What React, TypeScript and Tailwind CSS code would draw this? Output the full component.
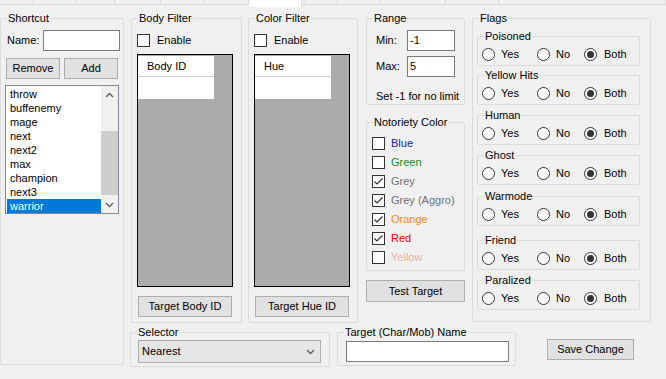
import type { ReactNode } from "react";
import clsx from "clsx";

const Group = ({
  title,
  className,
  children,
}: {
  title: string;
  className?: string;
  children?: ReactNode;
}) => (
  <div className={clsx("relative border border-[#dcdcdc] rounded-[2px]", className)}>
    <span className="absolute -top-[7px] left-[6px] bg-[#f0f0f0] px-[1px] leading-[13px] whitespace-nowrap">
      {title}
    </span>
    {children}
  </div>
);

const Button = ({ label, className }: { label: string; className?: string }) => (
  <div
    className={clsx(
      "flex items-center justify-center border border-[#adadad] bg-[#e1e1e1] leading-none",
      className
    )}
  >
    {label}
  </div>
);

const Check = ({ checked }: { checked?: boolean }) => (
  <div className="flex h-[13px] w-[13px] shrink-0 items-center justify-center border border-[#333] bg-white">
    {checked && (
      <svg width="11" height="11" viewBox="0 0 11 11">
        <polyline points="1.5,5.5 4,8 9.5,2.5" fill="none" stroke="#333" strokeWidth="1.2" />
      </svg>
    )}
  </div>
);

const Radio = ({ checked }: { checked?: boolean }) => (
  <div className="flex h-[13px] w-[13px] shrink-0 items-center justify-center rounded-full border border-[#333] bg-white">
    {checked && <div className="h-[7px] w-[7px] rounded-full bg-[#333]" />}
  </div>
);

const Chevron = ({ up }: { up?: boolean }) => (
  <svg width="9" height="6" viewBox="0 0 9 6">
    <polyline
      points={up ? "1,5 4.5,1.5 8,5" : "1,1 4.5,4.5 8,1"}
      fill="none"
      stroke="#606060"
      strokeWidth="1.4"
    />
  </svg>
);

const shortcuts = ["throw", "buffenemy", "mage", "next", "next2", "max", "champion", "next3", "warrior"];

const notoriety = [
  { label: "Blue", color: "text-[#1a1ab8]", checked: false },
  { label: "Green", color: "text-[#1a8a1a]", checked: false },
  { label: "Grey", color: "text-[#707070]", checked: true },
  { label: "Grey (Aggro)", color: "text-[#707070]", checked: true },
  { label: "Orange", color: "text-[#f58a1f]", checked: true },
  { label: "Red", color: "text-[#e00000]", checked: true },
  { label: "Yellow", color: "text-[#e8b0a6]", checked: false },
];

const flags = [
  { label: "Poisoned", mt: "mt-[17px]" },
  { label: "Yellow Hits", mt: "mt-[9px]" },
  { label: "Human", mt: "mt-[10px]" },
  { label: "Ghost", mt: "mt-[10px]" },
  { label: "Warmode", mt: "mt-[11px]" },
  { label: "Friend", mt: "mt-[14px]" },
  { label: "Paralized", mt: "mt-[10px]" },
];

const tabs = [34, 43, 38, 46, 43, 45, 53, 4, 32, 42, 66, 53, 167];

const FilterGroup = ({ title, column, button, className }: { title: string; column: string; button: string; className?: string }) => (
  <Group title={title} className={clsx("h-[305px] pl-[5px]", className)}>
    <div className="mt-[15px] flex h-[13px] items-center">
      <Check />
      <span className="ml-[7px]">Enable</span>
    </div>
    <div className="mt-[7px] h-[233px] w-[96px] border border-black bg-[#ababab] pt-[1px]">
      <div className="flex h-[21px] w-[76px] items-center border-b border-[#d0d0d0] bg-white pl-[9px]">{column}</div>
      <div className="h-[22px] w-[76px] bg-white" />
    </div>
    <Button label={button} className="ml-[1px] mt-[9px] h-[21px] w-[94px]" />
  </Group>
);

export default function App() {
  return (
    <div className="relative h-[379px] w-[666px] overflow-hidden bg-[#f0f0f0] font-['Liberation_Sans',Arial,sans-serif] text-[11px] text-black">
      <div className="flex h-[5px] border-b border-[#dadada]">
        {tabs.map((w, i) => (
          <div
            key={i}
            style={{ width: w }}
            className={clsx(
              "shrink-0 border-r border-[#dadada]",
              i === 6 && "-mb-[2px] h-[7px] bg-white"
            )}
          />
        ))}
      </div>

      <div className="mt-[13px] flex">
        <Group title="Shortcut" className="h-[347px] w-[124px] pl-[5px]">
          <div className="flex items-center pt-[11px]">
            <span className="ml-[1px] w-[36px]">Name:</span>
            <div className="h-[21px] w-[77px] border border-[#7a7a7a] bg-white" />
          </div>
          <div className="mt-[7px] flex gap-[4px]">
            <Button label="Remove" className="h-[21px] w-[54px]" />
            <Button label="Add" className="h-[21px] w-[54px]" />
          </div>
          <div className="-ml-[1px] mt-[6px] flex h-[129px] w-[114px] border border-[#828790] bg-white">
            <div className="flex-1 pl-[1px] pt-[1px]">
              {shortcuts.map((s) => (
                <div
                  key={s}
                  className={clsx(
                    "flex h-[14px] items-center pl-[3px]",
                    s === "warrior" && "bg-[#0078d7] text-white"
                  )}
                >
                  {s}
                </div>
              ))}
            </div>
            <div className="flex w-[17px] flex-col bg-[#f0f0f0]">
              <div className="flex h-[17px] items-center justify-center">
                <Chevron up />
              </div>
              <div className="mt-[28px] h-[64px] bg-[#cdcdcd]" />
              <div className="flex-1" />
              <div className="flex h-[17px] items-center justify-center">
                <Chevron />
              </div>
            </div>
          </div>
        </Group>

        <div className="ml-[6px] flex flex-col">
          <div className="flex items-start">
            <FilterGroup title="Body Filter" column="Body ID" button="Target Body ID" className="ml-[1px] w-[111px]" />
            <FilterGroup title="Color Filter" column="Hue" button="Target Hue ID" className="ml-[6px] w-[110px]" />

            <div className="ml-[8px] flex w-[99px] flex-col">
              <Group title="Range" className="h-[87px] pl-[9px]">
                <div className="flex items-center pt-[11px]">
                  <span className="w-[31px]">Min:</span>
                  <div className="flex h-[21px] w-[48px] items-center border border-[#7a7a7a] bg-white pl-[2px]">-1</div>
                </div>
                <div className="mt-[5px] flex items-center">
                  <span className="w-[31px]">Max:</span>
                  <div className="flex h-[21px] w-[48px] items-center border border-[#7a7a7a] bg-white pl-[2px]">5</div>
                </div>
                <div className="mt-[13px] leading-[13px]">Set -1 for no limit</div>
              </Group>

              <Group title="Notoriety Color" className="mt-[17px] h-[149px] pl-[5px] pt-[11px]">
                {notoriety.map((n) => (
                  <div key={n.label} className="flex h-[19px] items-center">
                    <Check checked={n.checked} />
                    <span className={clsx("ml-[6px]", n.color)}>{n.label}</span>
                  </div>
                ))}
              </Group>

              <Button label="Test Target" className="mt-[9px] h-[22px] w-[99px]" />
            </div>

            <Group title="Flags" className="ml-[7px] h-[304px] w-[179px] pl-[4px]">
              {flags.map((f) => (
                <Group key={f.label} title={f.label} className={clsx("h-[30px] w-[163px] pl-[4px]", f.mt)}>
                  <div className="mt-[10px] flex h-[14px] items-center">
                    <div className="flex w-[55px] items-center">
                      <Radio />
                      <span className="ml-[6px]">Yes</span>
                    </div>
                    <div className="flex w-[47px] items-center">
                      <Radio />
                      <span className="ml-[6px]">No</span>
                    </div>
                    <div className="flex items-center">
                      <Radio checked />
                      <span className="ml-[7px]">Both</span>
                    </div>
                  </div>
                </Group>
              ))}
            </Group>
          </div>

          <div className="mt-[9px] flex items-start">
            <Group title="Selector" className="h-[35px] w-[200px] pl-[7px] pt-[7px]">
              <div className="flex h-[23px] w-[183px] items-center justify-between border border-[#adadad] bg-[#e5e5e5] pl-[3px] pr-[5px]">
                <span>Nearest</span>
                <Chevron />
              </div>
            </Group>
            <Group title="Target (Char/Mob) Name" className="ml-[7px] h-[34px] w-[179px] pl-[8px] pt-[8px]">
              <div className="h-[21px] w-[163px] border border-[#7a7a7a] bg-white" />
            </Group>
            <Button label="Save Change" className="ml-[31px] mt-[7px] h-[21px] w-[87px]" />
          </div>
        </div>
      </div>
    </div>
  );
}
